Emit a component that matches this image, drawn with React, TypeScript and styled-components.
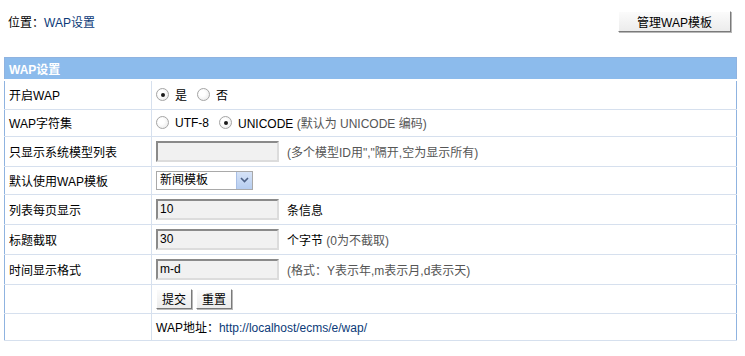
import React from 'react'
import styled, { createGlobalStyle } from 'styled-components'

const GlobalStyle = createGlobalStyle`
  body {
    margin: 0;
    background: #fff;
    font-family: "Liberation Sans", "Noto Sans CJK SC", sans-serif;
    font-size: 12px;
    color: #000;
  }
`

const Page = styled.div`
  padding: 10px 8px 0 4px;
`

const TopBar = styled.div`
  display: flex;
  align-items: center;
  justify-content: space-between;
  height: 22px;
  padding-left: 4px;
  padding-right: 6px;
  margin-bottom: 25px;
`

const Location = styled.div`
  font-size: 12px;
`

const Link = styled.a`
  color: #0b3a78;
  text-decoration: none;
`

const ClassicButton = styled.button<{ wide?: boolean }>`
  font-family: "Liberation Sans", "Noto Sans CJK SC", sans-serif;
  font-size: 12px;
  color: #000;
  height: ${p => (p.wide ? '21px' : '20px')};
  padding: ${p => (p.wide ? '0 18px' : '0 5px')};
  background: linear-gradient(#fbfbfb, #ececec);
  border: 1px solid;
  border-color: #fff #7a7a7a #7a7a7a #fff;
  box-shadow: 1px 1px 0 #b8b8b8;
  cursor: pointer;
`

const Table = styled.table`
  width: 733px;
  border-collapse: collapse;
  border: 1px solid #8fb3e0;
`

const HeaderCell = styled.th`
  background: #8cbbec;
  color: #fff;
  font-weight: bold;
  text-align: left;
  height: 21px;
  padding: 0 4px;
  border-bottom: 2px solid #fff;
`

const Row = styled.tr<{ h: number }>`
  height: ${p => p.h}px;
  border-bottom: 1px solid #d6e0ee;
`

const Label = styled.td`
  width: 138px;
  padding: 0 4px;
  border-right: 1px solid #d6e0ee;
  color: #000;
`

const Value = styled.td`
  padding: 0 4px;
`

const Inline = styled.div`
  display: flex;
  align-items: center;
  gap: 4px;
`

const RadioLabel = styled.label`
  display: inline-flex;
  align-items: center;
  gap: 6px;
  margin-right: 6px;
`

const RadioDot = styled.span<{ checked?: boolean }>`
  width: 11px;
  height: 11px;
  border-radius: 50%;
  border: 1px solid #a5a5a5;
  background: radial-gradient(circle at 40% 40%, #fff 30%, #e4e4e4 100%);
  display: inline-flex;
  align-items: center;
  justify-content: center;
  &::after {
    content: '';
    width: 4px;
    height: 4px;
    border-radius: 50%;
    background: ${p => (p.checked ? '#1a1a1a' : 'transparent')};
  }
`

const TextInput = styled.input`
  width: 115px;
  height: 15px;
  padding: 1px 2px;
  font-family: "Liberation Sans", "Noto Sans CJK SC", sans-serif;
  font-size: 12px;
  color: #000;
  background: #f1f1f1;
  border: 2px solid;
  border-color: #8a8a8a #dcdcdc #dcdcdc #8a8a8a;
  margin-right: 4px;
`

const Hint = styled.span`
  color: #555;
`

const SelectBox = styled.div`
  display: inline-flex;
  width: 95px;
  height: 17px;
  border: 1px solid #a9a9a9;
  background: #fff;
  vertical-align: middle;
`

const SelectText = styled.span`
  flex: 1;
  padding: 1px 3px;
  line-height: 15px;
`

const SelectArrow = styled.span`
  width: 15px;
  background: linear-gradient(#d6e3f7, #b6cdf0);
  border-left: 1px solid #a8bfe6;
  display: flex;
  align-items: center;
  justify-content: center;
`

const Radio: React.FC<{ checked?: boolean; children: React.ReactNode }> = ({ checked, children }) => (
  <RadioLabel>
    <RadioDot checked={checked} />
    {children}
  </RadioLabel>
)

export default function App() {
  return (
    <>
      <GlobalStyle />
      <Page>
        <TopBar>
          <Location>
            位置：<Link href="#">WAP设置</Link>
          </Location>
          <ClassicButton wide>管理WAP模板</ClassicButton>
        </TopBar>
        <Table>
          <thead>
            <tr>
              <HeaderCell colSpan={2}>WAP设置</HeaderCell>
            </tr>
          </thead>
          <tbody>
            <Row h={29}>
              <Label>开启WAP</Label>
              <Value>
                <Inline>
                  <Radio checked>是</Radio>
                  <Radio>否</Radio>
                </Inline>
              </Value>
            </Row>
            <Row h={27}>
              <Label>WAP字符集</Label>
              <Value>
                <Inline>
                  <Radio>UTF-8</Radio>
                  <Radio checked>
                    <span>
                      UNICODE <Hint>(默认为 UNICODE 编码)</Hint>
                    </span>
                  </Radio>
                </Inline>
              </Value>
            </Row>
            <Row h={30}>
              <Label>只显示系统模型列表</Label>
              <Value>
                <Inline>
                  <TextInput defaultValue="" />
                  <Hint>(多个模型ID用","隔开,空为显示所有)</Hint>
                </Inline>
              </Value>
            </Row>
            <Row h={28}>
              <Label>默认使用WAP模板</Label>
              <Value>
                <SelectBox>
                  <SelectText>新闻模板</SelectText>
                  <SelectArrow>
                    <svg width="9" height="6" viewBox="0 0 9 6">
                      <path d="M1 1 L4.5 4.5 L8 1" stroke="#4d6185" strokeWidth="1.6" fill="none" />
                    </svg>
                  </SelectArrow>
                </SelectBox>
              </Value>
            </Row>
            <Row h={30}>
              <Label>列表每页显示</Label>
              <Value>
                <Inline>
                  <TextInput defaultValue="10" />
                  <span>条信息</span>
                </Inline>
              </Value>
            </Row>
            <Row h={30}>
              <Label>标题截取</Label>
              <Value>
                <Inline>
                  <TextInput defaultValue="30" />
                  <span>
                    个字节 <Hint>(0为不截取)</Hint>
                  </span>
                </Inline>
              </Value>
            </Row>
            <Row h={30}>
              <Label>时间显示格式</Label>
              <Value>
                <Inline>
                  <TextInput defaultValue="m-d" />
                  <Hint>(格式：Y表示年,m表示月,d表示天)</Hint>
                </Inline>
              </Value>
            </Row>
            <Row h={29}>
              <Label></Label>
              <Value>
                <Inline>
                  <ClassicButton>提交</ClassicButton>
                  <ClassicButton>重置</ClassicButton>
                </Inline>
              </Value>
            </Row>
            <Row h={27}>
              <Label></Label>
              <Value>
                WAP地址：<Link href="#">http://localhost/ecms/e/wap/</Link>
              </Value>
            </Row>
          </tbody>
        </Table>
      </Page>
    </>
  )
}
